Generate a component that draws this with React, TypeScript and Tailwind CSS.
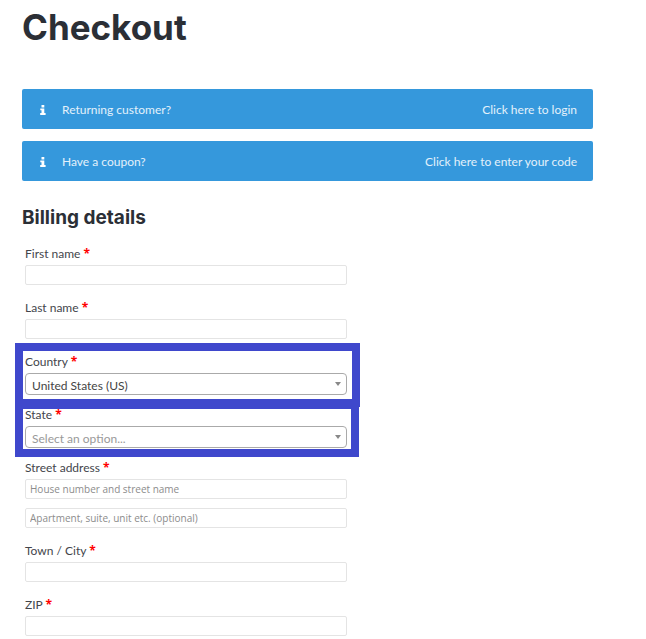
import React, { useState } from 'react';

interface NoticeProps {
  text: string;
  action: string;
}

interface LabelProps {
  htmlFor: string;
  children: React.ReactNode;
}

interface SelectFieldProps {
  id: string;
  label: string;
  options: string[];
  placeholder?: string;
  highlight: string;
}

const inputClass =
  "block h-5 w-full rounded-xs border border-[#e4e4e4] bg-white px-1 font-['Open_Sans',sans-serif] text-[10px] text-[#43454b] outline-none placeholder:text-[#8c8c8c]";

function Notice({ text, action }: NoticeProps) {
  return (
    <div className="flex h-10 items-center rounded-xs bg-[#3598dc] pt-px pr-4 pl-4 text-[12px] text-[#e3f1fb]">
      <svg viewBox="0 0 6 10" className="mr-4 ml-0.5 h-2.5 w-1.5 fill-white" aria-hidden="true">
        <path d="M1.5 0h2.8v2.4H1.5zM.3 3.4h4v4.7h1.3V10H.2V8.1h1.3V5.2H.3z" />
      </svg>
      <span>{text}</span>
      <a href="#" className="ml-auto">
        {action}
      </a>
    </div>
  );
}

function Label({ htmlFor, children }: LabelProps) {
  return (
    <label htmlFor={htmlFor} className="block h-[22px] text-[12px] leading-[22px] text-[#43454b]">
      {children}{' '}
      <span className="font-['Open_Sans',sans-serif] leading-none font-bold text-[#ff0000]">*</span>
    </label>
  );
}

function TextField({ id, label }: { id: string; label: string }) {
  return (
    <div className="mb-3">
      <Label htmlFor={id}>{label}</Label>
      <input id={id} type="text" className={inputClass} />
    </div>
  );
}

function SelectField({ id, label, options, placeholder, highlight }: SelectFieldProps) {
  const [value, setValue] = useState(placeholder ? '' : options[0]);

  return (
    <div className="relative mb-[9px]">
      <Label htmlFor={id}>{label}</Label>
      <div className="relative">
        <select
          id={id}
          value={value}
          onChange={(e) => setValue(e.target.value)}
          className={[
            'block h-[22px] w-full appearance-none rounded-sm border border-[#aaaaaa] bg-white',
            'pt-[3px] pr-6 pl-1.5 text-[12px] outline-none',
            value ? 'text-[#444444]' : 'text-[#999999]',
          ].join(' ')}
        >
          {placeholder && <option value="">{placeholder}</option>}
          {options.map((option) => (
            <option key={option} value={option}>
              {option}
            </option>
          ))}
        </select>
        <svg
          viewBox="0 0 6 4"
          className="pointer-events-none absolute top-[9px] right-1.5 h-1 w-1.5 fill-[#888888]"
          aria-hidden="true"
        >
          <path d="M0 0h6L3 4z" />
        </svg>
      </div>
      {/* Marker frame around the field */}
      <div className={`pointer-events-none absolute border-8 border-[#3f48cc] ${highlight}`} />
    </div>
  );
}

export default function App() {
  return (
    <main className="min-h-screen bg-white pr-[53px] pl-[22px] font-[Lato,sans-serif]">
      <h1 className="pt-1 font-['Inter',sans-serif] text-[35px] leading-[46px] font-bold text-[#2b2f36]">
        Checkout
      </h1>

      <div className="mt-[39px] flex flex-col gap-3">
        <Notice text="Returning customer?" action="Click here to login" />
        <Notice text="Have a coupon?" action="Click here to enter your code" />
      </div>

      <h2 className="mt-[21px] font-['Inter',sans-serif] text-[19px] leading-8 font-bold text-[#2b2f36]">
        Billing details
      </h2>

      <form className="mt-[9px] ml-[3px] max-w-[322px]">
        <TextField id="first-name" label="First name" />
        <TextField id="last-name" label="Last name" />
        <SelectField
          id="country"
          label="Country"
          options={['United States (US)']}
          highlight="-top-2 -right-[13px] -bottom-3 -left-[10px]"
        />
        <SelectField
          id="state"
          label="State"
          options={['California', 'New York', 'Texas']}
          placeholder="Select an option..."
          highlight="-top-[3px] -right-3 -bottom-[9px] -left-[10px]"
        />
        <div className="mb-3">
          <Label htmlFor="street">Street address</Label>
          <input
            id="street"
            type="text"
            placeholder="House number and street name"
            className={inputClass}
          />
          <input
            type="text"
            aria-label="Apartment"
            placeholder="Apartment, suite, unit etc. (optional)"
            className={`mt-[9px] ${inputClass}`}
          />
        </div>
        <TextField id="city" label="Town / City" />
        <div>
          <Label htmlFor="zip">ZIP</Label>
          <input id="zip" type="text" className={inputClass} />
        </div>
      </form>
    </main>
  );
}
